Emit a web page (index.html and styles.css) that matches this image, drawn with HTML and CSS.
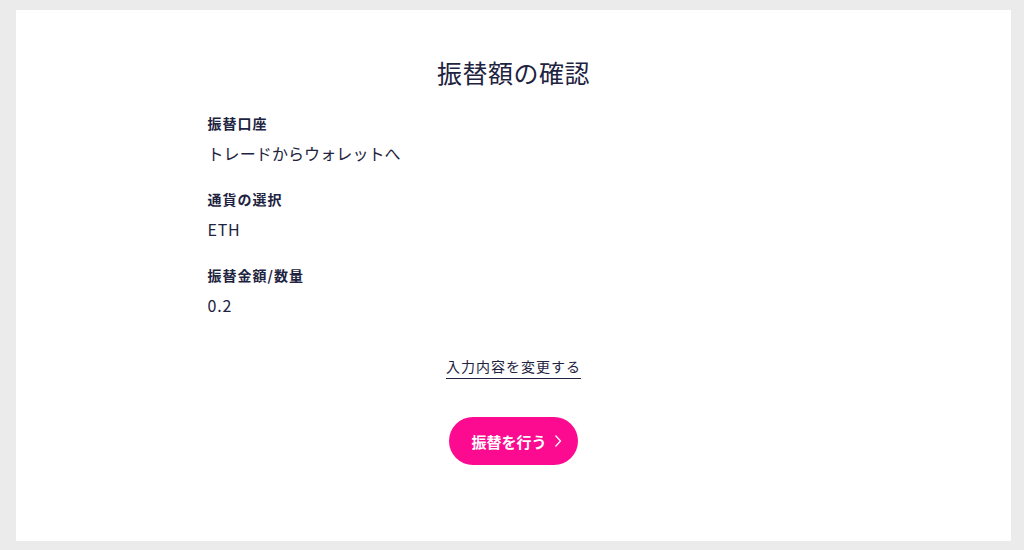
FILE: index.html
```html
<!DOCTYPE html>
<html lang="ja">
<head>
<meta charset="utf-8">
<title>振替額の確認</title>
<link rel="stylesheet" href="styles.css">
</head>
<body>
<main class="card">
  <h1 class="title">振替額の確認</h1>
  <dl class="details">
    <div class="item">
      <dt class="label">振替口座</dt>
      <dd class="value">トレードからウォレットへ</dd>
    </div>
    <div class="item">
      <dt class="label">通貨の選択</dt>
      <dd class="value latin">ETH</dd>
    </div>
    <div class="item">
      <dt class="label">振替金額/数量</dt>
      <dd class="value latin">0.2</dd>
    </div>
  </dl>
  <div class="actions">
    <a class="edit-link" href="#">入力内容を変更する</a>
    <button class="submit" type="button">振替を行う<svg class="chev" width="8" height="14" viewBox="0 0 8 14"><path d="M1.5 1.5 L6.5 7 L1.5 12.5" fill="none" stroke="#ffffff" stroke-width="1.3"/></svg></button>
  </div>
</main>
</body>
</html>
```
FILE: styles.css
```css
html, body {
  margin: 0;
  padding: 0;
}
body {
  background: #ebebeb;
  padding: 10px 13px 9px 16px;
  font-family: "Noto Sans CJK JP", "Noto Sans", sans-serif;
  color: #1d2340;
}
.card {
  background: #ffffff;
  height: 531px;
  box-sizing: border-box;
  padding-top: 46px;
  display: flex;
  flex-direction: column;
  align-items: center;
}
.title {
  margin: 0;
  font-size: 25px;
  font-weight: 400;
  line-height: 32px;
  letter-spacing: 0.5px;
}
.details {
  margin: 0;
  margin-top: 24px;
  width: 612px;
  display: flex;
  flex-direction: column;
  gap: 23px;
}
.item {
  display: flex;
  flex-direction: column;
}
.label {
  font-size: 14px;
  font-weight: 700;
  line-height: 22px;
  letter-spacing: 1px;
}
.value {
  margin: 7px 0 0 0;
  font-size: 16px;
  line-height: 24px;
  letter-spacing: 0.1px;
}
.value.latin {
  letter-spacing: 0.8px;
}
.actions {
  margin-top: 39px;
  display: flex;
  flex-direction: column;
  align-items: center;
}
.edit-link {
  color: #1d2340;
  font-size: 14px;
  line-height: 20px;
  letter-spacing: 1px;
  text-decoration: none;
  border-bottom: 1px solid #1d2340;
  padding-bottom: 2px;
}
.submit {
  margin-top: 38px;
  width: 129px;
  height: 48px;
  border: none;
  border-radius: 24px;
  background: #fc0a8f;
  color: #ffffff;
  font-family: "Noto Sans CJK JP", "Noto Sans", sans-serif;
  font-size: 15px;
  font-weight: 700;
  display: flex;
  align-items: center;
  justify-content: center;
  gap: 7px;
  padding: 0 0 0 6px;
}
.chev {
  display: block;
}
```
